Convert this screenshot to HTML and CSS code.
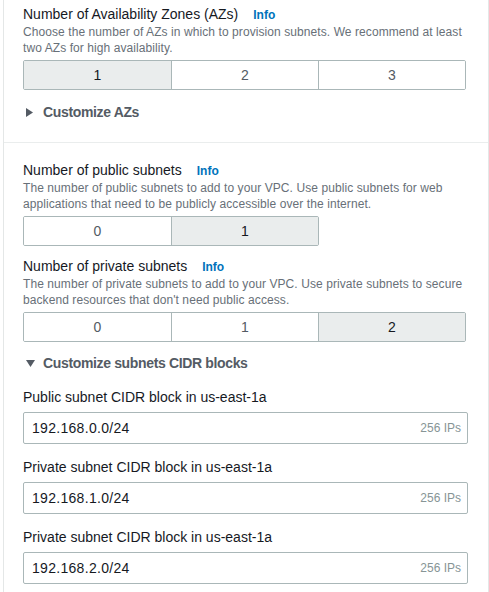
FILE: index.html
```html
<!DOCTYPE html>
<html lang="en">
<head>
<meta charset="utf-8">
<title>VPC subnets</title>
<link rel="stylesheet" href="styles.css">
</head>
<body>
<div class="panel">
  <section class="sec sec-first">
    <div class="field">
      <div class="title-row"><span class="title">Number of Availability Zones (AZs)</span><a class="info" href="#">Info</a></div>
      <p class="desc">Choose the number of AZs in which to provision subnets. We recommend at least two AZs for high availability.</p>
      <div class="seg">
        <button class="seg-btn is-on">1</button>
        <button class="seg-btn">2</button>
        <button class="seg-btn">3</button>
      </div>
    </div>
    <div class="expander expander-az">
      <svg class="caret" width="7" height="9" viewBox="0 0 7 9"><polygon points="0,0 7,4.5 0,9" fill="#545b64"/></svg>
      <span>Customize AZs</span>
    </div>
  </section>

  <section class="sec sec-second">
    <div class="field">
      <div class="title-row"><span class="title">Number of public subnets</span><a class="info" href="#">Info</a></div>
      <p class="desc">The number of public subnets to add to your VPC. Use public subnets for web applications that need to be publicly accessible over the internet.</p>
      <div class="seg">
        <button class="seg-btn">0</button>
        <button class="seg-btn is-on">1</button>
      </div>
    </div>
    <div class="field field-next">
      <div class="title-row"><span class="title">Number of private subnets</span><a class="info" href="#">Info</a></div>
      <p class="desc">The number of private subnets to add to your VPC. Use private subnets to secure backend resources that don't need public access.</p>
      <div class="seg">
        <button class="seg-btn">0</button>
        <button class="seg-btn">1</button>
        <button class="seg-btn is-on">2</button>
      </div>
    </div>
    <div class="expander expander-cidr">
      <svg class="caret caret-down" width="9" height="7" viewBox="0 0 9 7"><polygon points="0,0 9,0 4.5,7" fill="#545b64"/></svg>
      <span>Customize subnets CIDR blocks</span>
    </div>

    <div class="cidr">
      <label class="cidr-label">Public subnet CIDR block in us-east-1a</label>
      <div class="cidr-input"><span class="cidr-value">192.168.0.0/24</span><span class="cidr-count">256 IPs</span></div>
    </div>
    <div class="cidr">
      <label class="cidr-label">Private subnet CIDR block in us-east-1a</label>
      <div class="cidr-input"><span class="cidr-value">192.168.1.0/24</span><span class="cidr-count">256 IPs</span></div>
    </div>
    <div class="cidr">
      <label class="cidr-label">Private subnet CIDR block in us-east-1a</label>
      <div class="cidr-input"><span class="cidr-value">192.168.2.0/24</span><span class="cidr-count">256 IPs</span></div>
    </div>
  </section>
</div>
</body>
</html>
```

FILE: styles.css
```css
* { box-sizing: border-box; }

html, body {
  margin: 0;
  padding: 0;
  background: #ffffff;
}

body {
  font-family: "Liberation Sans", Arial, sans-serif;
  color: #16191f;
  overflow: hidden;
}

.panel {
  margin-left: 3px;
  width: 486px;
  min-height: 592px;
  border-left: 1px solid #e4e7e7;
  border-right: 1px solid #e4e7e7;
}

.sec {
  padding: 0 20px 0 19px;
}

.sec-first {
  padding-top: 4px;
  padding-bottom: 20px;
}

.sec-second {
  border-top: 1px solid #eaeded;
  padding-top: 17px;
}

.title-row {
  display: flex;
  align-items: baseline;
  gap: 15px;
  height: 20px;
  line-height: 20px;
}

.title {
  font-size: 14px;
  color: #16191f;
}

.info {
  font-size: 12px;
  font-weight: 700;
  color: #0073bb;
  text-decoration: none;
}

.desc {
  margin: 0;
  font-size: 12px;
  letter-spacing: 0.08px;
  line-height: 16px;
  color: #687078;
}

.seg {
  display: inline-grid;
  grid-auto-flow: column;
  grid-auto-columns: 147px;
  margin-top: 4px;
  height: 30px;
  border: 1px solid #aab7b8;
  border-radius: 2px;
  overflow: hidden;
  vertical-align: top;
}

.seg-btn {
  margin: 0;
  padding: 0;
  border: 0;
  border-left: 1px solid #aab7b8;
  background: #ffffff;
  font-family: inherit;
  font-size: 14px;
  color: #545b64;
  line-height: 28px;
  text-align: center;
}

.seg-btn:first-child {
  border-left: 0;
}

.seg-btn.is-on {
  background: #eaeded;
  color: #16191f;
}

.field {
  display: flex;
  flex-direction: column;
  align-items: flex-start;
}

.field-next {
  margin-top: 10px;
}

.expander {
  display: flex;
  align-items: center;
  height: 20px;
  padding-left: 3px;
  font-size: 14px;
  font-weight: 700;
  letter-spacing: -0.35px;
  color: #545b64;
}

.expander-az {
  margin-top: 12px;
}

.expander-cidr {
  margin-top: 11px;
}

.caret {
  flex: none;
  margin-right: 10px;
}

.caret-down {
  margin-right: 8px;
}

.cidr {
  margin-top: 13px;
}

.expander-cidr + .cidr {
  margin-top: 14px;
}

.cidr-label {
  display: block;
  font-size: 14px;
  line-height: 20px;
  color: #16191f;
}

.cidr-input {
  display: flex;
  align-items: center;
  justify-content: space-between;
  margin-top: 5px;
  height: 32px;
  padding: 0 6px 0 8px;
  border: 1px solid #aab7b8;
  border-radius: 2px;
  background: #ffffff;
}

.cidr-value {
  font-size: 14px;
  letter-spacing: 0.3px;
  color: #16191f;
}

.cidr-count {
  font-size: 12px;
  color: #879596;
}
```
